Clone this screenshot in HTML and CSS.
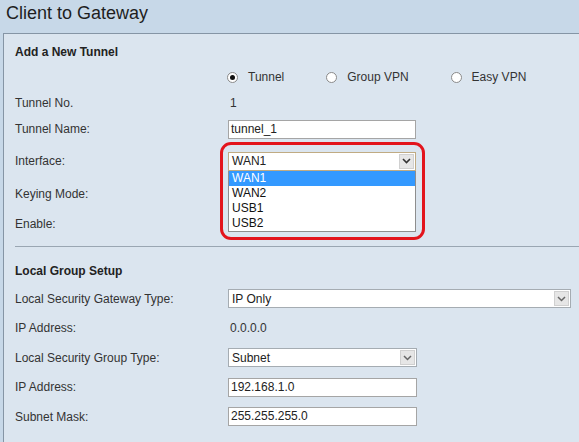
FILE: index.html
```html
<!DOCTYPE html>
<html>
<head>
<meta charset="utf-8">
<link rel="stylesheet" href="styles.css">
</head>
<body>
<div class="title">Client to Gateway</div>
<div class="panel">
  <div class="heading">Add a New Tunnel</div>
  <div class="row row-radio">
    <div class="label"></div>
    <div class="radios">
      <span class="radio-item"><span class="radio checked"></span>Tunnel</span>
      <span class="radio-item"><span class="radio"></span>Group VPN</span>
      <span class="radio-item"><span class="radio"></span>Easy VPN</span>
    </div>
  </div>
  <div class="row">
    <div class="label">Tunnel No.</div>
    <div class="value">1</div>
  </div>
  <div class="row">
    <div class="label">Tunnel Name:</div>
    <div class="input w188">tunnel_1</div>
  </div>
  <div class="row row-iface">
    <div class="label">Interface:</div>
    <div class="iface-wrap">
      <div class="select w188 focused"><span class="sel-text">WAN1</span><span class="arrow"><svg width="9" height="6" viewBox="0 0 9 6"><path d="M1 1 L4.5 4.5 L8 1" fill="none" stroke="#333" stroke-width="1.6"/></svg></span></div>
      <div class="listbox">
        <div class="opt selected">WAN1</div>
        <div class="opt">WAN2</div>
        <div class="opt">USB1</div>
        <div class="opt">USB2</div>
      </div>
      <div class="highlight"></div>
    </div>
  </div>
  <div class="row row-key">
    <div class="label">Keying Mode:</div>
  </div>
  <div class="row row-enable">
    <div class="label">Enable:</div>
  </div>
  <div class="sep"></div>
  <div class="heading heading2">Local Group Setup</div>
  <div class="rows-local">
    <div class="row row-l">
      <div class="label">Local Security Gateway Type:</div>
      <div class="select w343"><span class="sel-text">IP Only</span><span class="arrow"><svg width="9" height="6" viewBox="0 0 9 6"><path d="M1 1 L4.5 4.5 L8 1" fill="none" stroke="#666" stroke-width="1.5"/></svg></span></div>
    </div>
    <div class="row row-l">
      <div class="label">IP Address:</div>
      <div class="value">0.0.0.0</div>
    </div>
    <div class="row row-l">
      <div class="label">Local Security Group Type:</div>
      <div class="select w189"><span class="sel-text">Subnet</span><span class="arrow"><svg width="9" height="6" viewBox="0 0 9 6"><path d="M1 1 L4.5 4.5 L8 1" fill="none" stroke="#666" stroke-width="1.5"/></svg></span></div>
    </div>
    <div class="row row-l">
      <div class="label">IP Address:</div>
      <div class="input w189">192.168.1.0</div>
    </div>
    <div class="row row-l">
      <div class="label">Subnet Mask:</div>
      <div class="input w189">255.255.255.0</div>
    </div>
  </div>
</div>
</body>
</html>
```
FILE: styles.css
```css
html, body {
  margin: 0;
  padding: 0;
}
body {
  background: #c7d8e8;
  font-family: "Liberation Sans", Arial, sans-serif;
  font-size: 12px;
  color: #333;
  width: 579px;
  height: 442px;
  overflow: hidden;
}
.title {
  font-size: 18px;
  color: #1e1e1e;
  line-height: 22px;
  padding: 2px 0 0 6px;
  height: 31px;
  box-sizing: border-box;
  height: 33px;
}
.panel {
  margin-left: 3px;
  border-top: 1px solid #8595a5;
  border-left: 1px solid #8595a5;
  background: #dbe5ef;
  padding-left: 11px;
  padding-top: 10px;
  height: 420px;
}
.heading {
  font-weight: bold;
  color: #222;
  height: 16px;
  line-height: 16px;
  margin-bottom: 4px;
}
.heading2 {
  margin-top: 16px;
  margin-bottom: 5px;
}
.row {
  display: flex;
  align-items: center;
  height: 26px;
}
.row-iface { height: 38px; }
.row-key { height: 28px; }
.row-enable { height: 32px; }
.row-l { height: 29.5px; }
.label {
  width: 213px;
  flex: none;
}
.value {
  padding-left: 2px;
}
.radios {
  display: flex;
  align-items: center;
}
.radio-item {
  display: inline-flex;
  align-items: center;
  margin-right: 42px;
}
.radio-item:first-child { margin-left: -1px; }
.radio {
  width: 11px;
  height: 11px;
  border: 1px solid #8a8a8a;
  border-radius: 50%;
  background: #fff;
  box-sizing: border-box;
  margin-right: 10px;
  position: relative;
}
.radio.checked::after {
  content: "";
  position: absolute;
  left: 2px;
  top: 2px;
  width: 5px;
  height: 5px;
  border-radius: 50%;
  background: #111;
}
.input {
  height: 19px;
  box-sizing: border-box;
  border: 1px solid #a5a5a5;
  background: #fff;
  line-height: 17px;
  padding-left: 2px;
  color: #222;
}
.w188 { width: 188px; }
.w189 { width: 189px; }
.w343 { width: 343px; }
.select {
  height: 19px;
  box-sizing: border-box;
  border: 1px solid #a5acb2;
  background: #fff;
  display: flex;
  align-items: center;
  color: #222;
}
.select.focused {
  border-color: #c0ab83;
}
.sel-text {
  flex: 1;
  padding-left: 3px;
}
.arrow {
  width: 15px;
  height: 15px;
  margin-right: 1px;
  background: #e6e6e6;
  border: 1px solid #d0d0d0;
  box-sizing: border-box;
  display: flex;
  align-items: center;
  justify-content: center;
}
.iface-wrap {
  position: relative;
}
.listbox {
  position: absolute;
  left: 0;
  top: 19px;
  width: 188px;
  box-sizing: border-box;
  border: 1px solid #8e8e8e;
  border-top: none;
  background: #fff;
  z-index: 2;
}
.opt {
  height: 15px;
  line-height: 15px;
  padding-left: 3px;
  color: #111;
}
.opt.selected {
  background: #3399ff;
  color: #fff;
}
.highlight {
  position: absolute;
  left: -8px;
  top: -10px;
  width: 205px;
  height: 98px;
  box-sizing: border-box;
  border: 3px solid #e3141c;
  border-radius: 11px;
  z-index: 3;
}
.sep {
  margin-top: 6px;
  height: 1px;
  background: #9aa6b2;
}
```
